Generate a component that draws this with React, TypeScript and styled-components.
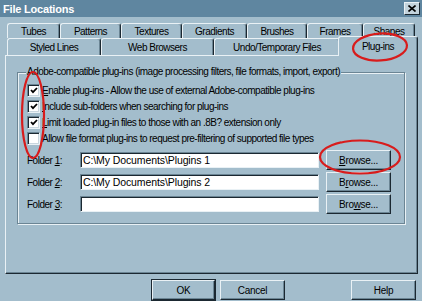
import React from 'react';
import styled, { createGlobalStyle } from 'styled-components';

const face = '#a3bdcc';
const titleBlue = '#5f86a0';
const dark = '#1b2831';
const shadow = '#6b8594';
const light = '#e9f1f5';

const GlobalStyle = createGlobalStyle`
  html, body {
    margin: 0;
    padding: 0;
    background: ${face};
  }
`;

const Window = styled.div`
  position: relative;
  width: 422px;
  height: 301px;
  overflow: hidden;
  background: ${face};
  font-family: "Liberation Sans", Arial, sans-serif;
  font-size: 10px;
  letter-spacing: -0.5px;
  color: #000;
`;

const TitleBar = styled.div`
  height: 17px;
  display: flex;
  align-items: center;
  padding: 0 2px 0 3px;
  background: ${titleBlue};
`;

const Title = styled.span`
  color: #fff;
  font-weight: bold;
  font-size: 11px;
  letter-spacing: -0.2px;
`;

const CloseBtn = styled.div`
  margin-left: auto;
  width: 16px;
  height: 13px;
  box-sizing: border-box;
  display: flex;
  align-items: center;
  justify-content: center;
  background: #c3d3dc;
  border-top: 1px solid ${light};
  border-left: 1px solid ${light};
  border-right: 1px solid ${dark};
  border-bottom: 1px solid ${dark};
`;

const Body = styled.div`
  padding: 6px 4px 0 5px;
`;

const TabRow = styled.div<{ $front?: boolean }>`
  display: flex;
  align-items: flex-end;
  padding-left: 2px;
  height: ${(p) => (p.$front ? 17 : 15)}px;
  position: relative;
  z-index: ${(p) => (p.$front ? 2 : 1)};
`;

const Tab = styled.div<{ $w: number; $active?: boolean; $h: number }>`
  flex: 0 0 ${(p) => p.$w + (p.$active ? 4 : 0)}px;
  height: ${(p) => (p.$active ? p.$h + 3 : p.$h)}px;
  margin: ${(p) => (p.$active ? '0 -2px -1px -2px' : '0')};
  box-sizing: border-box;
  display: flex;
  align-items: center;
  justify-content: center;
  padding-top: ${(p) => (p.$active ? 0 : 1)}px;
  background: ${face};
  border-top: 1px solid ${light};
  border-left: 1px solid ${light};
  border-right: 1px solid ${dark};
  box-shadow: inset -1px 0 0 ${shadow};
  border-radius: 3px 3px 0 0;
  position: relative;
  z-index: ${(p) => (p.$active ? 3 : 1)};
  white-space: nowrap;
`;

const Panel = styled.div`
  height: 219px;
  box-sizing: border-box;
  padding: 10px 12px 0 11px;
  border-top: 1px solid ${light};
  border-left: 1px solid ${light};
  border-right: 1px solid ${dark};
  border-bottom: 1px solid ${dark};
  box-shadow: inset -1px -1px 0 ${shadow};
`;

const Group = styled.fieldset`
  margin: 0;
  width: 388px;
  min-width: 0;
  box-sizing: border-box;
  padding: 4px 0 9px 9px;
  border: 1px solid ${shadow};
  box-shadow: inset 1px 1px 0 ${light}, 1px 1px 0 ${light};
`;

const Legend = styled.legend`
  margin-left: -1px;
  padding: 0 1px;
  line-height: 12px;
  background: ${face};
`;

const CheckRow = styled.div`
  display: flex;
  align-items: center;
  gap: 2px;
  height: 16px;
  white-space: nowrap;
`;

const CheckBox = styled.span`
  flex: 0 0 13px;
  height: 13px;
  box-sizing: border-box;
  display: flex;
  align-items: center;
  justify-content: center;
  background: #fff;
  border-top: 1px solid ${shadow};
  border-left: 1px solid ${shadow};
  border-right: 1px solid ${light};
  border-bottom: 1px solid ${light};
  box-shadow: inset 1px 1px 0 ${dark}, inset -1px -1px 0 #c9d6de;
`;

const FolderGrid = styled.div`
  margin-top: 4px;
  display: grid;
  grid-template-columns: 46px 239px 65px;
  grid-auto-rows: 20px;
  column-gap: 7px;
  row-gap: 2px;
  align-items: center;
`;

const FolderLabel = styled.span`
  white-space: nowrap;
`;

const PathBox = styled.input`
  height: 16px;
  box-sizing: border-box;
  margin: 0;
  padding: 0 0 0 2px;
  font-family: inherit;
  font-size: 10.5px;
  letter-spacing: -0.1px;
  color: #000;
  background: #fff;
  border-top: 1px solid ${shadow};
  border-left: 1px solid ${shadow};
  border-right: 1px solid ${light};
  border-bottom: 1px solid ${light};
  box-shadow: inset 1px 1px 0 ${dark};
  outline: none;
`;

const Button = styled.button<{ $default?: boolean }>`
  width: ${(p) => (p.$default ? 63 : 65)}px;
  height: 20px;
  box-sizing: border-box;
  margin: 0;
  padding: 0;
  font-family: inherit;
  font-size: 10px;
  letter-spacing: -0.3px;
  color: #000;
  background: ${face};
  border-top: 1px solid ${light};
  border-left: 1px solid ${light};
  border-right: 1px solid ${dark};
  border-bottom: 1px solid ${dark};
  box-shadow: inset -1px -1px 0 ${shadow}${(p) => (p.$default ? `, 0 0 0 1px ${dark}` : '')};
`;

const Footer = styled.div`
  display: flex;
  gap: 5px;
  padding: 6px 2px 0 147px;
`;

const HelpSlot = styled.div`
  margin-left: auto;
`;

const Marks = styled.svg`
  position: absolute;
  inset: 0;
  z-index: 10;
  pointer-events: none;
`;

const backTabs: [string, number][] = [
  ['Tubes', 53],
  ['Patterns', 61],
  ['Textures', 61],
  ['Gradients', 65],
  ['Brushes', 60],
  ['Frames', 56],
  ['Shapes', 52],
];

const frontTabs: [string, number][] = [
  ['Styled Lines', 94],
  ['Web Browsers', 113],
  ['Undo/Temporary Files', 126],
  ['Plug-ins', 76],
];

const Check = () => (
  <svg width="8" height="7" viewBox="0 0 8 7">
    <polyline points="1,3 3,5.2 7,1" fill="none" stroke="#000" strokeWidth="1.8" />
  </svg>
);

const checks: { on: boolean; key: string; rest: string }[] = [
  { on: true, key: 'E', rest: 'nable plug-ins - Allow the use of external Adobe-compatible plug-ins' },
  { on: true, key: 'I', rest: 'nclude sub-folders when searching for plug-ins' },
  { on: true, key: 'L', rest: 'imit loaded plug-in files to those with an .8B? extension only' },
  { on: false, key: '', rest: 'Allow file format plug-ins to request pre-filtering of supported file types' },
];

const folders = [
  { n: '1', path: 'C:\\My Documents\\Plugins 1', btn: ['', 'B', 'rowse...'] },
  { n: '2', path: 'C:\\My Documents\\Plugins 2', btn: ['B', 'r', 'owse...'] },
  { n: '3', path: '', btn: ['Bro', 'w', 'se...'] },
];

export default function App() {
  return (
    <>
      <GlobalStyle />
      <Window>
        <TitleBar>
          <Title>File Locations</Title>
          <CloseBtn>
            <svg width="8" height="7" viewBox="0 0 8 7">
              <path d="M0.5 0.5 L7.5 6.5 M7.5 0.5 L0.5 6.5" stroke="#000" strokeWidth="1.6" />
            </svg>
          </CloseBtn>
        </TitleBar>
        <Body>
          <TabRow>
            {backTabs.map(([label, w]) => (
              <Tab key={label} $w={w} $h={15}>
                {label}
              </Tab>
            ))}
          </TabRow>
          <TabRow $front>
            {frontTabs.map(([label, w]) => (
              <Tab key={label} $w={w} $h={17} $active={label === 'Plug-ins'}>
                {label}
              </Tab>
            ))}
          </TabRow>
          <Panel>
            <Group>
              <Legend>Adobe-compatible plug-ins (image processing filters, file formats, import, export)</Legend>
              {checks.map((c) => (
                <CheckRow key={c.rest}>
                  <CheckBox>{c.on && <Check />}</CheckBox>
                  <span>
                    {c.key && <u>{c.key}</u>}
                    {c.rest}
                  </span>
                </CheckRow>
              ))}
              <FolderGrid>
                {folders.map((f) => (
                  <React.Fragment key={f.n}>
                    <FolderLabel>
                      Folder <u>{f.n}</u>:
                    </FolderLabel>
                    <PathBox readOnly defaultValue={f.path} />
                    <Button>
                      {f.btn[0]}
                      <u>{f.btn[1]}</u>
                      {f.btn[2]}
                    </Button>
                  </React.Fragment>
                ))}
              </FolderGrid>
            </Group>
          </Panel>
          <Footer>
            <Button $default>OK</Button>
            <Button>Cancel</Button>
            <HelpSlot>
              <Button>Help</Button>
            </HelpSlot>
          </Footer>
        </Body>
        <Marks width="422" height="301" viewBox="0 0 422 301">
          <ellipse cx="380" cy="47" rx="27" ry="13.5" fill="none" stroke="#d81c1c" strokeWidth="2.2" transform="rotate(-4 380 47)" />
          <ellipse cx="33" cy="115" rx="11" ry="43" fill="none" stroke="#d81c1c" strokeWidth="2.2" />
          <ellipse cx="360" cy="157" rx="40" ry="16.5" fill="none" stroke="#d81c1c" strokeWidth="2.2" />
        </Marks>
      </Window>
    </>
  );
}
